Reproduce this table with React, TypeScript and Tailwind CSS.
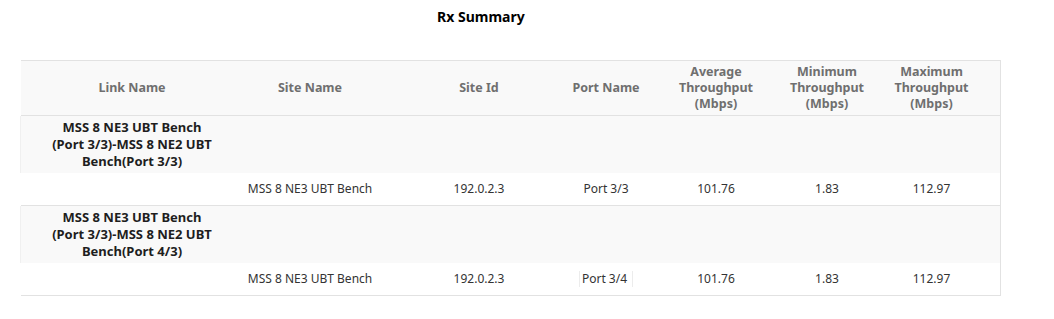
import React from "react";

const cols = "grid grid-cols-[213px_152px_186px_68px_152px_70px_139px]";

type Row = { link: string[]; site: string; id: string; port: string; avg: string; min: string; max: string; marked?: boolean };

const rows: Row[] = [
  {
    link: ["MSS 8 NE3 UBT Bench", "(Port 3/3)-MSS 8 NE2 UBT", "Bench(Port 3/3)"],
    site: "MSS 8 NE3 UBT Bench",
    id: "192.0.2.3",
    port: "Port 3/3",
    avg: "101.76",
    min: "1.83",
    max: "112.97",
  },
  {
    link: ["MSS 8 NE3 UBT Bench", "(Port 3/3)-MSS 8 NE2 UBT", "Bench(Port 4/3)"],
    site: "MSS 8 NE3 UBT Bench",
    id: "192.0.2.3",
    port: "Port 3/4",
    avg: "101.76",
    min: "1.83",
    max: "112.97",
    marked: true,
  },
];

function H({ lines, pl }: { lines: string[]; pl?: boolean }) {
  return (
    <div className={`flex flex-col items-center justify-center whitespace-nowrap ${pl ? "pl-[9px]" : ""}`}>
      {lines.map((l, i) => (
        <span key={i} className="block">
          {l}
        </span>
      ))}
    </div>
  );
}

function D({ children }: { children: React.ReactNode }) {
  return <div className="flex items-center justify-center whitespace-nowrap">{children}</div>;
}

export default function App() {
  return (
    <div className="w-[1054px] h-[319px] bg-white font-['Noto_Sans',sans-serif] overflow-hidden">
      <div className="h-[60px] pt-[7px]">
        <div className="ml-[437px] text-[14px] leading-[19px] font-bold text-black">Rx Summary</div>
      </div>
      <div className="ml-[21px] w-[980px] border-t border-r border-[#e2e2e2]">
        <div className={`${cols} h-[55px] bg-[#f9f9f9] border-b border-[#e2e2e2] text-[12.5px] leading-[16px] font-bold text-[#6f6f6f]`}>
          <H lines={["Link Name"]} pl />
          <H lines={["Site Name"]} />
          <H lines={["Site Id"]} />
          <H lines={["Port Name"]} />
          <H lines={["Average", "Throughput", "(Mbps)"]} />
          <H lines={["Minimum", "Throughput", "(Mbps)"]} />
          <H lines={["Maximum", "Throughput", "(Mbps)"]} />
        </div>
        {rows.map((r, i) => (
          <div key={i} className="border-b border-[#e2e2e2]">
            <div className="h-[57px] bg-[#f9f9f9] border-l border-[#f0f0f0] -ml-px flex">
              <div className="w-[213px] pl-[9px] flex items-center justify-center">
                <div className="text-center text-[13px] leading-[17px] font-bold text-[#1e1e1e] -mt-px">
                  {r.link.map((l, j) => (
                    <span key={j} className="block whitespace-nowrap">
                      {l}
                    </span>
                  ))}
                </div>
              </div>
            </div>
            <div className={`${cols} h-[32px] bg-white text-[12px] text-[#333]`}>
              <div />
              <D>{r.site}</D>
              <D>{r.id}</D>
              <D>
                {r.marked ? (
                  <span className="border-x border-[#ececec] pl-[2px] pr-[5px] leading-[16px]">{r.port}</span>
                ) : (
                  r.port
                )}
              </D>
              <D>{r.avg}</D>
              <D>{r.min}</D>
              <D>{r.max}</D>
            </div>
          </div>
        ))}
      </div>
    </div>
  );
}
